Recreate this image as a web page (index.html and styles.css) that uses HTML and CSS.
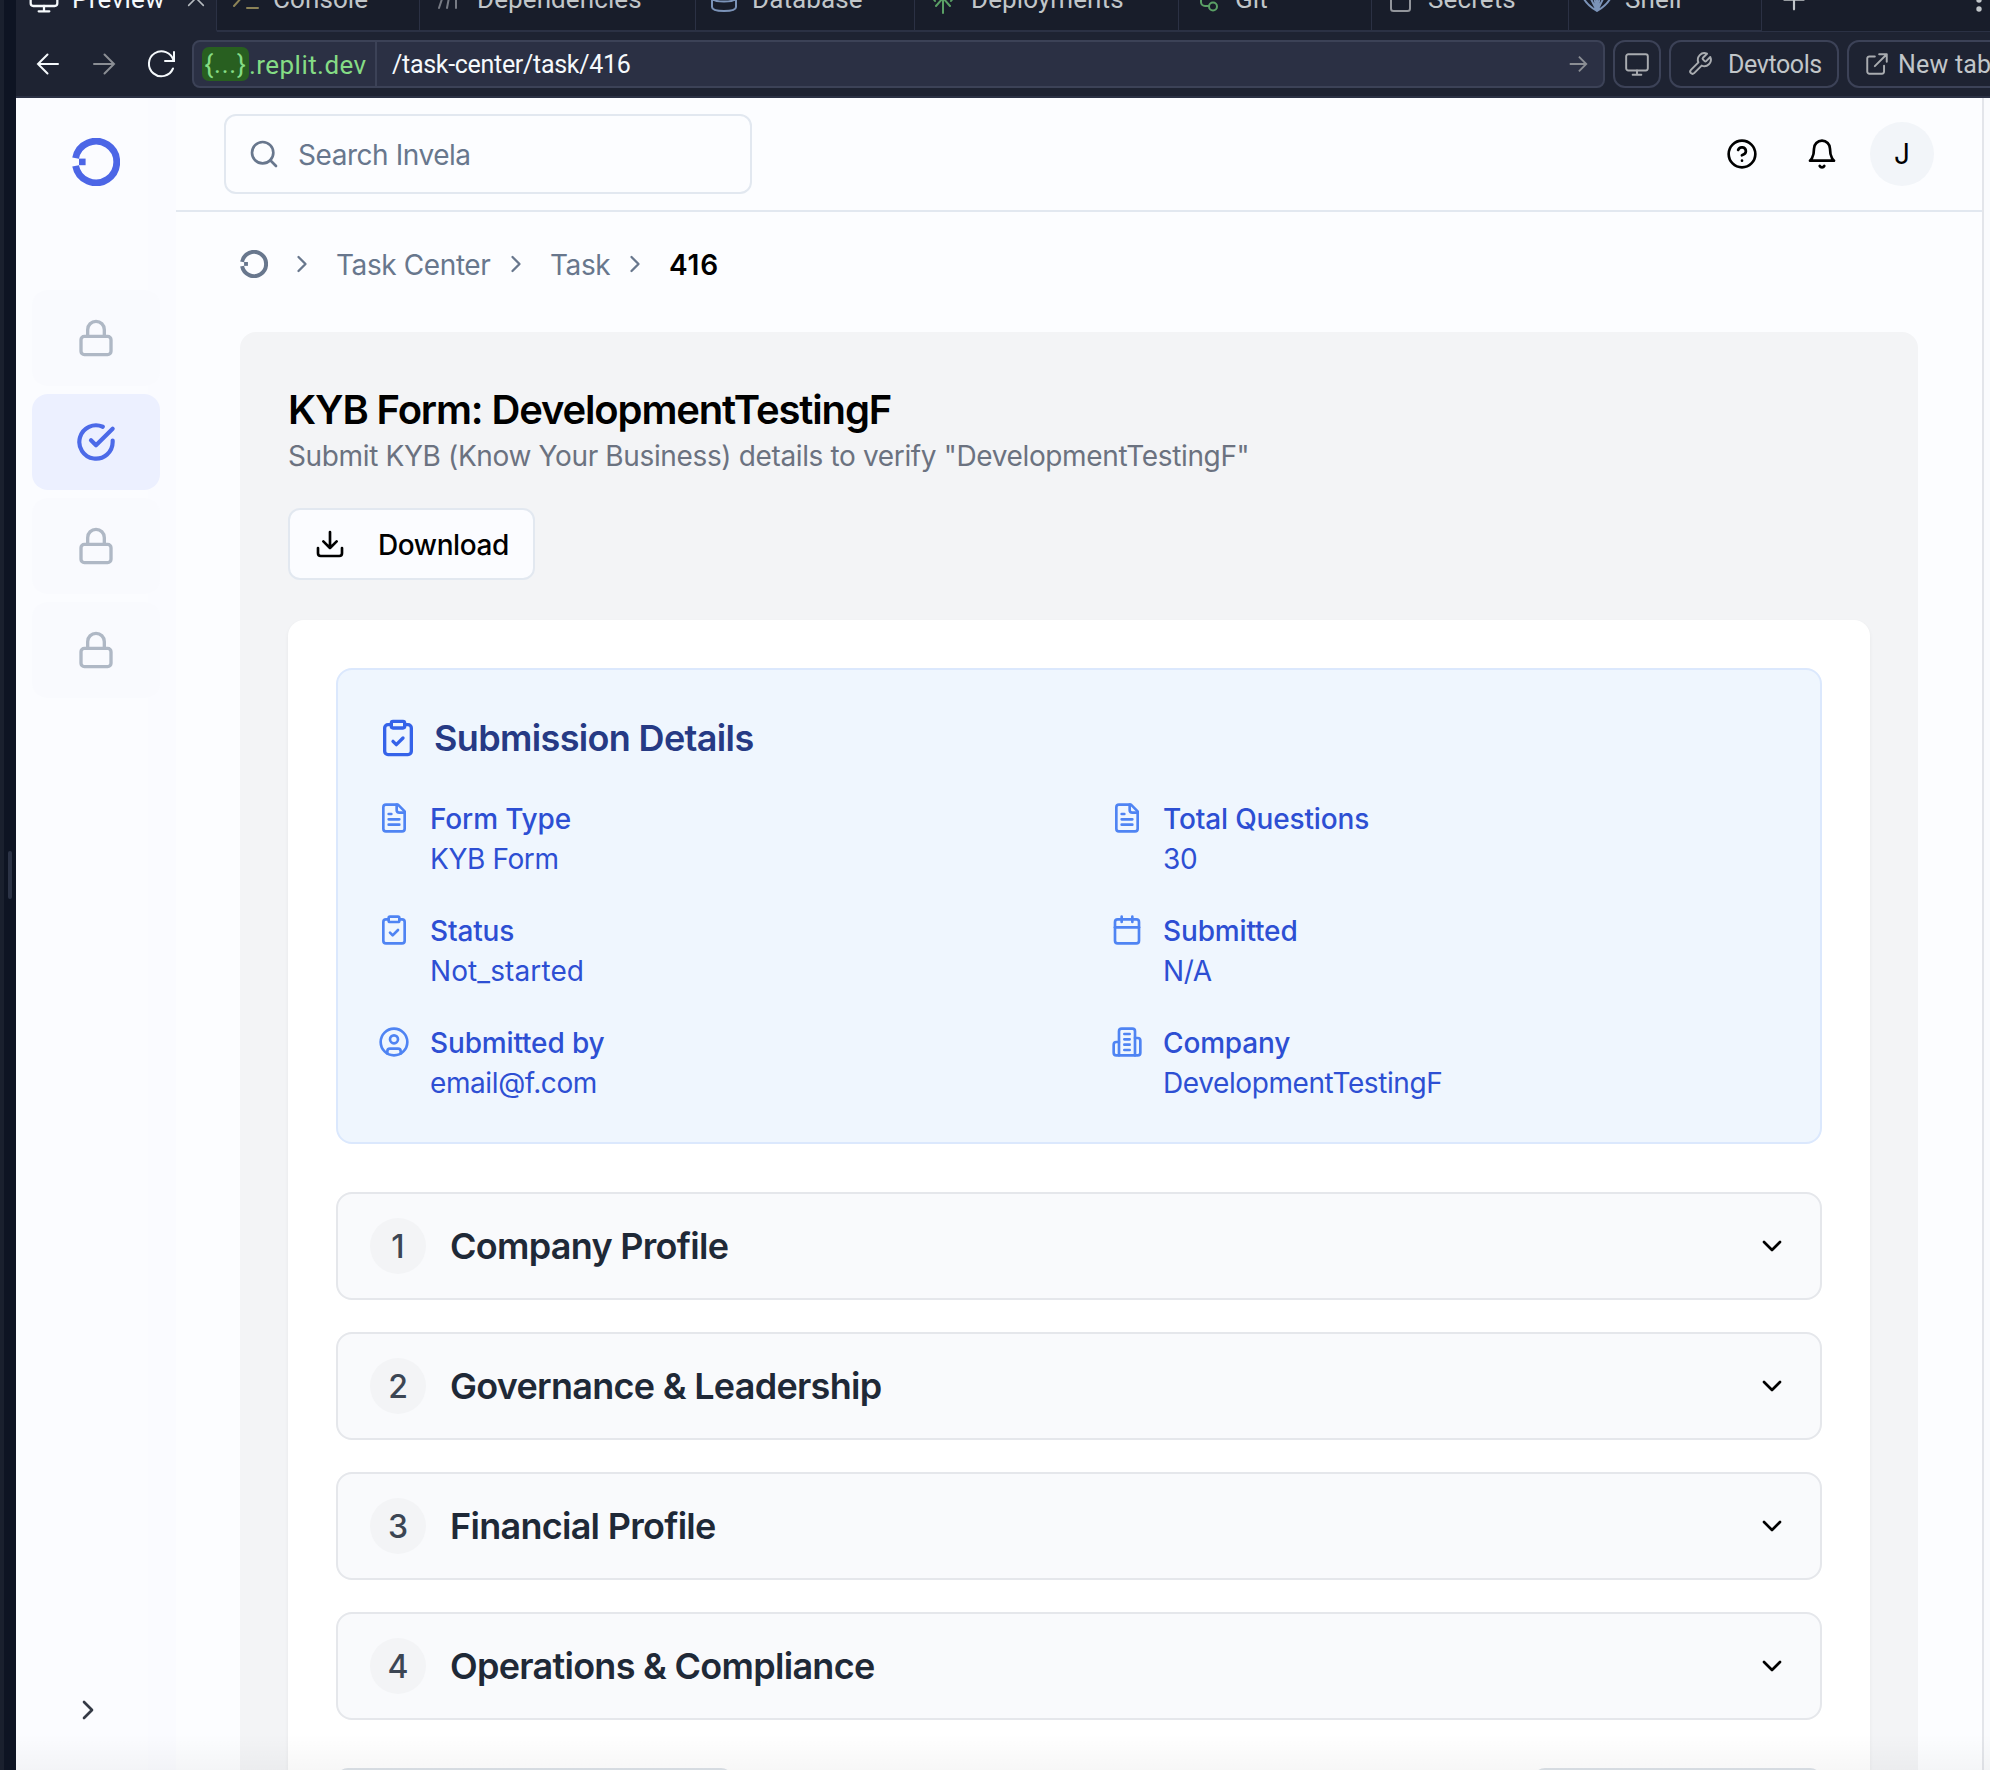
FILE: index.html
```html
<!DOCTYPE html>
<html lang="en">
<head>
<meta charset="utf-8">
<title>Task 416</title>
<link rel="stylesheet" href="styles.css">
</head>
<body>
<svg class="defs" width="0" height="0" aria-hidden="true">
  <symbol id="logo" viewBox="0 0 48 48">
    <path d="M3.6 20.2A20.75 20.75 0 1 1 3.6 27.8" fill="none" stroke="currentColor" stroke-width="6.8"/>
    <rect x="7" y="20.6" width="6.6" height="6.6" fill="currentColor"/>
  </symbol>
  <symbol id="lock" viewBox="0 0 24 24"><rect x="3" y="11" width="18" height="11" rx="2"/><path d="M7 11V7a5 5 0 0 1 10 0v4"/></symbol>
  <symbol id="check-circle" viewBox="0 0 24 24"><path d="M22 11.08V12a10 10 0 1 1-5.93-9.14"/><path d="m9 11 3 3L22 4"/></symbol>
  <symbol id="chev-r" viewBox="0 0 24 24"><path d="m9 18 6-6-6-6"/></symbol>
  <symbol id="chev-d" viewBox="0 0 24 24"><path d="m6 9 6 6 6-6"/></symbol>
  <symbol id="file" viewBox="0 0 24 24"><path d="M15 2H6a2 2 0 0 0-2 2v16a2 2 0 0 0 2 2h12a2 2 0 0 0 2-2V7Z"/><path d="M14 2v4a2 2 0 0 0 2 2h4"/><path d="M10 9H8M16 13H8M16 17H8"/></symbol>
  <symbol id="clip" viewBox="0 0 24 24"><rect x="8" y="2" width="8" height="4" rx="1"/><path d="M16 4h2a2 2 0 0 1 2 2v14a2 2 0 0 1-2 2H6a2 2 0 0 1-2-2V6a2 2 0 0 1 2-2h2"/><path d="m9 14 2 2 4-4"/></symbol>
  <symbol id="calendar" viewBox="0 0 24 24"><path d="M8 2v4M16 2v4"/><rect x="3" y="4" width="18" height="18" rx="2"/><path d="M3 10h18"/></symbol>
  <symbol id="user" viewBox="0 0 24 24"><circle cx="12" cy="12" r="10"/><circle cx="12" cy="10" r="3"/><path d="M7 20.662V19a2 2 0 0 1 2-2h6a2 2 0 0 1 2 2v1.662"/></symbol>
  <symbol id="building" viewBox="0 0 24 24"><path d="M6 22V4a2 2 0 0 1 2-2h8a2 2 0 0 1 2 2v18Z"/><path d="M6 12H4a2 2 0 0 0-2 2v6a2 2 0 0 0 2 2h2M18 9h2a2 2 0 0 1 2 2v9a2 2 0 0 1-2 2h-2"/><path d="M10 6h4M10 10h4M10 14h4M10 18h4"/></symbol>
  <symbol id="monitor" viewBox="0 0 24 24"><rect x="2" y="3" width="20" height="15" rx="2"/><path d="M12 18v4M8 22h8"/></symbol>
</svg>

<div class="window">
  <aside class="gutter"><span class="grip"></span></aside>
  <div class="pane">
    <div class="tabbar">
      <div class="tabs">
        <div class="tab tab-preview"><svg class="icon i32"><use href="#monitor"/></svg><span>Preview</span><svg class="icon i22 close" viewBox="0 0 24 24"><path d="M4 4l16 16M20 4 4 20"/></svg></div>
        <div class="tab tab-console"><svg class="icon i32" viewBox="0 0 32 32"><path d="m6 6 8 8-9 10M18 26h11"/></svg><span>Console</span></div>
        <div class="tab tab-deps"><svg class="icon i32" viewBox="0 0 32 32"><path d="M7 26 14 5M15 26 19 5M24 26V5"/></svg><span>Dependencies</span></div>
        <div class="tab tab-db"><svg class="icon i32" viewBox="0 0 32 32"><ellipse cx="16" cy="7" rx="12" ry="4"/><path d="M4 7v18c0 2.500 5 4 12 4s12-1.500 12-4V7M4 15.500c0 2.500 5 4 12 4s12-1.500 12-4"/></svg><span>Database</span></div>
        <div class="tab tab-deploy"><svg class="icon i32" viewBox="0 0 32 32"><path d="M16 31V4M8 12l8-8 8 8M9 24l7-8 7 8M5 15l3 4M27 15l-3 4"/></svg><span>Deployments</span></div>
        <div class="tab tab-git"><svg class="icon i32" viewBox="0 0 32 32"><circle cx="10" cy="7" r="4"/><circle cx="22" cy="24.500" r="4"/><path d="M10 11v9a4 4 0 0 0 4 4h4"/></svg><span>Git</span></div>
        <div class="tab tab-secrets"><svg class="icon i32" viewBox="0 0 32 32"><rect x="7" y="10" width="19" height="19" rx="2.500"/><path d="M11 10V6a5 5 0 0 1 10 0v4"/></svg><span>Secrets</span></div>
        <div class="tab tab-shell"><svg class="icon i32" viewBox="0 0 32 32"><path d="M16 29C9 25 4 20 1.500 14 4 6 10 3 16 3s12 3 14.500 11C28 20 23 25 16 29ZM16 29 6 9M16 29 11 5M16 29V3M16 29l5-24M16 29 26 9"/></svg><span>Shell</span></div>
        <div class="tab-tail"><svg class="icon i26" viewBox="0 0 24 24"><path d="M12 3.500v18M3 12.500h18"/></svg><svg class="dots" viewBox="0 0 8 32"><circle cx="4" cy="8" r="2.700"/><circle cx="4" cy="17" r="2.700"/><circle cx="4" cy="26" r="2.700"/></svg></div>
      </div>
    </div>

    <div class="toolbar">
      <svg class="nav-icon" viewBox="0 0 32 32"><path d="M26 16H6M15.500 6.500 6 16l9.500 9.500"/></svg>
      <svg class="nav-icon dim" viewBox="0 0 32 32"><path d="M6 16h20M16.500 6.500 26 16l-9.500 9.500"/></svg>
      <svg class="nav-icon reload" viewBox="0 0 32 32"><path d="M29 4v9h-9M28.500 12.500A12.500 12.500 0 1 0 28 20.500"/></svg>
      <div class="address">
        <div class="host"><span class="chip">{...}</span><span class="domain">.replit.dev</span></div>
        <div class="path">/task-center/task/416</div>
        <svg class="go" viewBox="0 0 24 24"><path d="M3 12h18M13 4l8 8-8 8"/></svg>
      </div>
      <div class="tool tool-screen"><svg class="icon i26"><use href="#monitor"/></svg></div>
      <div class="tool tool-dev"><svg class="icon i26" viewBox="0 0 24 24"><path d="M14.700 6.300a1 1 0 0 0 0 1.400l1.600 1.600a1 1 0 0 0 1.400 0l3.770-3.770a6 6 0 0 1-7.940 7.940l-6.910 6.910a2.120 2.120 0 0 1-3-3l6.910-6.910a6 6 0 0 1 7.940-7.940l-3.760 3.760z"/></svg><span>Devtools</span></div>
      <div class="tool tool-new"><svg class="icon i26" viewBox="0 0 24 24"><path d="M14 3h7v7M21 3 10 14M18.500 13.500V19a2 2 0 0 1-2 2H5a2 2 0 0 1-2-2V7a2 2 0 0 1 2-2h5"/></svg><span>New tab</span></div>
    </div>

    <div class="app">
      <nav class="sidebar">
        <svg class="brand"><use href="#logo"/></svg>
        <div class="menu">
          <div class="menu-item"><svg class="icon i40"><use href="#lock"/></svg></div>
          <div class="menu-item active"><svg class="icon i40"><use href="#check-circle"/></svg></div>
          <div class="menu-item"><svg class="icon i40"><use href="#lock"/></svg></div>
          <div class="menu-item"><svg class="icon i40"><use href="#lock"/></svg></div>
        </div>
        <svg class="icon i32 expand"><use href="#chev-r"/></svg>
      </nav>

      <main class="main">
        <header class="header">
          <div class="search"><svg class="icon i32" viewBox="0 0 24 24"><circle cx="11" cy="11" r="8"/><path d="m21 21-4.300-4.300"/></svg><span>Search Invela</span></div>
          <div class="actions">
            <svg class="icon i32" viewBox="0 0 24 24"><circle cx="12" cy="12" r="10"/><path d="M9.090 9a3 3 0 0 1 5.830 1c0 2-3 3-3 3M12 17h.01"/></svg>
            <svg class="icon i32" viewBox="0 0 24 24"><path d="M6 8a6 6 0 0 1 12 0c0 7 3 9 3 9H3s3-2 3-9"/><path d="M10.300 21a1.940 1.940 0 0 0 3.400 0"/></svg>
            <div class="avatar">J</div>
          </div>
        </header>

        <div class="crumbs">
          <svg class="crumb-logo"><use href="#logo"/></svg>
          <svg class="icon i28"><use href="#chev-r"/></svg>
          <span class="crumb crumb-center">Task Center</span>
          <svg class="icon i28"><use href="#chev-r"/></svg>
          <span class="crumb crumb-task">Task</span>
          <svg class="icon i28"><use href="#chev-r"/></svg>
          <span class="crumb current">416</span>
        </div>

        <section class="panel">
          <h1>KYB Form: DevelopmentTestingF</h1>
          <p class="subtitle">Submit KYB (Know Your Business) details to verify "DevelopmentTestingF"</p>
          <div class="download"><svg class="icon i32" viewBox="0 0 24 24"><path d="M21 15v4a2 2 0 0 1-2 2H5a2 2 0 0 1-2-2v-4M7 10l5 5 5-5M12 15V3"/></svg><span>Download</span></div>

          <div class="card">
            <div class="details">
              <h2><svg class="icon i40"><use href="#clip"/></svg><span>Submission Details</span></h2>
              <div class="grid">
                <div class="fact"><svg class="icon i32"><use href="#file"/></svg><div><b>Form Type</b><p>KYB Form</p></div></div>
                <div class="fact"><svg class="icon i32"><use href="#file"/></svg><div><b>Total Questions</b><p>30</p></div></div>
                <div class="fact"><svg class="icon i32"><use href="#clip"/></svg><div><b>Status</b><p class="status">Not_started</p></div></div>
                <div class="fact"><svg class="icon i32"><use href="#calendar"/></svg><div><b>Submitted</b><p>N/A</p></div></div>
                <div class="fact"><svg class="icon i32"><use href="#user"/></svg><div><b>Submitted by</b><p>email@f.com</p></div></div>
                <div class="fact"><svg class="icon i32"><use href="#building"/></svg><div><b>Company</b><p>DevelopmentTestingF</p></div></div>
              </div>
            </div>
            <div class="sections">
              <div class="section"><span class="num">1</span><h3>Company Profile</h3><svg class="icon i32"><use href="#chev-d"/></svg></div>
              <div class="section"><span class="num">2</span><h3>Governance &amp; Leadership</h3><svg class="icon i32"><use href="#chev-d"/></svg></div>
              <div class="section"><span class="num">3</span><h3>Financial Profile</h3><svg class="icon i32"><use href="#chev-d"/></svg></div>
              <div class="section"><span class="num">4</span><h3>Operations &amp; Compliance</h3><svg class="icon i32"><use href="#chev-d"/></svg></div>
            </div>
            <div class="footer"><div class="foot-btn back"></div><div class="foot-btn next"></div></div>
          </div>
        </section>
      </main>
      <div class="scroll-edge"></div>
    </div>
  </div>
  <div class="fade"></div>
</div>
</body>
</html>
```
FILE: styles.css
```css
* { box-sizing: border-box; margin: 0; padding: 0; }
html, body { width: 1990px; height: 1770px; overflow: hidden; }
body { background: #0e1423; font-family: Inter, "Liberation Sans", sans-serif; font-size: 28px; }
.defs { position: absolute; }

.icon { fill: none; stroke: currentColor; stroke-width: 2; stroke-linecap: round; stroke-linejoin: round; flex: none; overflow: visible; }
.i22 { width: 22px; height: 22px; }
.i26 { width: 26px; height: 26px; }
.i28 { width: 28px; height: 28px; }
.i32 { width: 32px; height: 32px; }
.i40 { width: 40px; height: 40px; }

.window { position: relative; display: flex; width: 1990px; height: 1770px; overflow: hidden; }
.gutter { width: 16px; flex: none; display: flex; align-items: center; justify-content: flex-end; padding-right: 4px; border-left: 4px solid #1a202e; background: #0e1423; }
.grip { width: 4px; height: 48px; border-radius: 2px; background: #2b3245; margin-top: -20px; }
.pane { width: 1974px; flex: none; display: flex; flex-direction: column; overflow: hidden; background: #1e2332; }

/* Workspace tabs */
.tabbar { height: 32px; flex: none; overflow: hidden; font-family: Roboto, "Liberation Sans", sans-serif; font-size: 26px; color: #c1c6c9; }
.tabs { display: flex; height: 66px; margin-top: -34px; }
.tab { display: flex; align-items: center; flex: none; padding-left: 12px; background: #181d2a; border-right: 1px solid #2b3144; border-bottom: 2px solid #2b3144; letter-spacing: .1px; }
.tab span { margin-left: 12px; padding-top: 1px; white-space: nowrap; }
.tab-preview { width: 201px; background: #1e2332; border-bottom-color: #1e2332; color: #f5f9fc; letter-spacing: .3px; }
.tab-preview .icon { stroke-width: 1.700; }
.tab-preview .close { margin-left: auto; margin-right: 9px; color: #b5babf; }
.tab-console { width: 203px; }
.tab-console .icon { color: #8c8357; }
.tab-deps { width: 276px; }
.tab-deps .icon { color: #777b84; }
.tab-deps span { margin-left: 13px; }
.tab-db { width: 219px; }
.tab-db .icon { color: #7b93b8; }
.tab-deploy { width: 264px; }
.tab-deploy .icon { color: #5aa065; }
.tab-git { width: 193px; }
.tab-git .icon { color: #5aa065; }
.tab-secrets { width: 197px; }
.tab-secrets .icon { color: #92959b; }
.tab-shell { width: 193px; }
.tab-shell .icon { color: #7b93b8; }
.tab-tail { flex: 1; display: flex; align-items: center; justify-content: space-between; padding: 0 7px 0 19px; background: #181d2a; border-bottom: 1px solid #2b3144; }
.dots { width: 8px; height: 32px; fill: #c1c6c9; }

/* Browser toolbar */
.toolbar { display: flex; align-items: center; height: 66px; flex: none; padding-left: 16px; border-bottom: 2px solid #2b3144; font-family: Roboto, "Liberation Sans", sans-serif; font-size: 25px; }
.nav-icon { width: 32px; height: 32px; margin-right: 24px; fill: none; stroke: #f5f9fc; stroke-width: 2; stroke-linejoin: miter; stroke-linecap: round; flex: none; }
.nav-icon.dim { stroke: #8b8e94; }
.nav-icon.reload { margin: 0 15px 0 1px; }
.address { display: flex; align-items: center; width: 1413px; height: 48px; flex: none; border: 2px solid #3c4257; border-radius: 8px; background: #2b3044; }
.host { display: flex; align-items: center; width: 183px; height: 44px; padding-left: 8px; border-right: 2px solid #3c4257; color: #85dc85; letter-spacing: .45px; font-size: 26px; }
.domain { padding-top: 2px; }
.chip { width: 47px; height: 34px; line-height: 34px; text-align: center; border-radius: 7px; background: #285f20; letter-spacing: .8px; }
.path { padding: 1px 0 0 15px; color: #f5f9fc; letter-spacing: -.3px; }
.go { width: 22px; height: 22px; margin-left: auto; margin-right: 14px; fill: none; stroke: #8b8e94; stroke-width: 2; }
.tool { display: flex; align-items: center; height: 48px; flex: none; margin-left: 8px; border: 2px solid #3c4257; border-radius: 12px; color: #c1c6c9; white-space: nowrap; letter-spacing: -.4px; }
.tool span { padding-top: 1px; }
.tool .icon { stroke-width: 1.800; color: #a9acb0; }
.tool-screen { width: 48px; justify-content: center; }
.tool-dev { width: 170px; padding-left: 16px; gap: 15px; }
.tool-new { width: 170px; padding-left: 15px; gap: 8px; letter-spacing: .2px; }

/* Application shell */
.app { display: flex; flex: 1; min-height: 0; background: #fcfdff; color: #000; }
.sidebar { display: flex; flex-direction: column; width: 160px; flex: none; background: linear-gradient(90deg, #fbfcff 132px, #fafbff 132px); }
.brand { width: 48px; height: 48px; margin: 40px 0 104px 56px; color: #4c66e6; flex: none; }
.menu { display: flex; flex-direction: column; gap: 8px; padding-left: 16px; }
.menu-item { display: flex; align-items: center; justify-content: center; width: 128px; height: 96px; border-radius: 16px; background: #f9fafe; color: #afb8c5; }
.menu-item.active { background: #ecf0ff; color: #4c6ae8; }
.active .icon { stroke-width: 2.500; }
.expand { margin: auto 0 44px 56px; color: #343a46; }

.main { width: 1806px; flex: none; }
.scroll-edge { flex: 1; border-left: 2px solid #e3e5ea; background: #fafbfd; }
.header { display: flex; justify-content: space-between; height: 114px; padding: 16px 48px 0; border-bottom: 2px solid #e2e8f0; }
.search { display: flex; align-items: center; gap: 18px; width: 528px; height: 80px; padding-left: 22px; border: 2px solid #e2e8f0; border-radius: 12px; color: #68778d; letter-spacing: -.45px; }
.search span, .download span { padding-top: 2px; }
.actions { display: flex; align-items: center; height: 80px; gap: 48px; }
.avatar { width: 64px; height: 64px; margin-left: -16px; border-radius: 50%; background: #f2f5f9; line-height: 65px; text-align: center; }

.crumbs { display: flex; align-items: center; height: 104px; padding-left: 64px; color: #68778d; white-space: nowrap; letter-spacing: -.4px; }
.crumb-logo { width: 28px; height: 28px; margin-right: 20px; }
.crumb { margin-left: 20px; padding-top: 1px; }
.crumb-center { width: 166px; }
.crumb-task { width: 71px; }
.current { color: #000; font-weight: 600; letter-spacing: .8px; }

.panel { width: 1678px; height: 1600px; margin: 16px 0 0 64px; padding: 48px 48px 0; border-radius: 16px; background: #f3f4f6; }
h1 { height: 56px; font-size: 40px; line-height: 59px; font-weight: 600; letter-spacing: -1.14px; white-space: nowrap; }
.subtitle { height: 40px; line-height: 41px; color: #6b7280; white-space: nowrap; letter-spacing: -.36px; }
.download { display: flex; align-items: center; gap: 32px; width: 247px; height: 72px; margin-top: 32px; padding-left: 24px; border: 2px solid #e2e8f0; border-radius: 12px; background: #fbfcff; font-weight: 500; letter-spacing: -.4px; }
.card { height: 1400px; margin-top: 40px; padding: 48px; border-radius: 16px; background: #fff; box-shadow: 0 2px 4px rgba(0,0,0,.05); }

.details { padding: 40px; border: 2px solid #dbe8fd; border-radius: 16px; background: #eff6fe; }
h2 { display: flex; align-items: center; gap: 16px; height: 56px; margin-bottom: 32px; font-size: 36px; font-weight: 600; letter-spacing: -.65px; color: #263a84; }
h2 .icon { color: #3563e9; }
.grid { display: grid; grid-template-columns: 1fr 1fr; gap: 32px 64px; }
.fact { display: flex; gap: 20px; height: 80px; line-height: 40px; color: #2d4fd3; }
.fact > div { padding-top: 1px; }
.fact .icon { margin-top: 4px; color: #4f84f3; }
.fact b { display: block; font-weight: 500; letter-spacing: -.15px; }
.fact p { letter-spacing: -.4px; }
.fact .status { letter-spacing: .1px; }

.sections { display: flex; flex-direction: column; gap: 32px; margin-top: 48px; }
.section { display: flex; align-items: center; height: 108px; padding: 0 32px; border: 2px solid #e5e7eb; border-radius: 16px; background: #f9fafc; }
.num { width: 56px; height: 56px; border-radius: 50%; background: #f3f4f6; color: #3c4654; font-size: 32px; line-height: 58px; text-align: center; font-weight: 500; }
h3 { margin-left: 24px; font-size: 36px; font-weight: 600; letter-spacing: -.72px; color: #1f2937; white-space: nowrap; }
.section .icon { margin-left: auto; color: #000; }
.footer { display: flex; justify-content: space-between; margin-top: 48px; }
.foot-btn { height: 72px; border: 2px solid #dce2e8; border-radius: 12px; background: #fcfdff; }
.back { width: 397px; }
.next { width: 289px; }

.fade { position: absolute; left: 16px; right: 0; bottom: 0; height: 36px; background: linear-gradient(rgba(0,0,0,0), rgba(0,0,0,.03)); }
```
